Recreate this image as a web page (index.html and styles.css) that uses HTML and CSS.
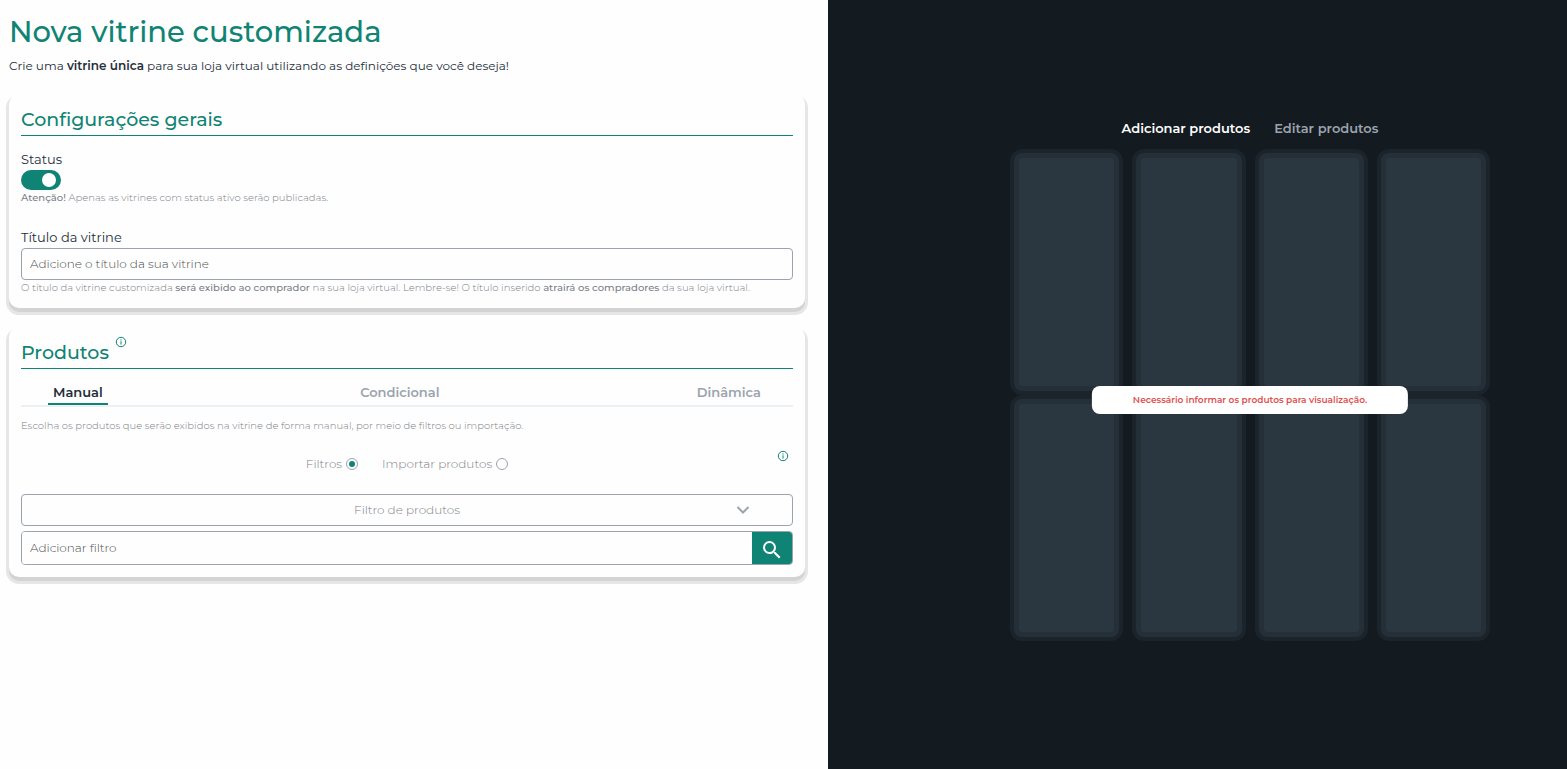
FILE: index.html
```html
<!DOCTYPE html>
<html lang="pt-BR">

<head>
    <meta charset="UTF-8">
    <title>Nova vitrine customizada</title>
    <link rel="stylesheet" href="styles.css">
</head>

<body>
    <div class="page">
        <main class="editor">
            <h1 class="title">Nova vitrine customizada</h1>
            <p class="subtitle">Crie uma <b>vitrine única</b> para sua loja virtual utilizando as definições que você deseja!</p>

            <section class="card">
                <h2 class="card-title">Configurações gerais</h2>
                <label class="label" for="status">Status</label>
                <input class="switch" type="checkbox" id="status" checked>
                <p class="hint"><b>Atenção!</b> Apenas as vitrines com status ativo serão publicadas.</p>

                <label class="label label-title" for="titulo">Título da vitrine</label>
                <input class="field" type="text" id="titulo" placeholder="Adicione o título da sua vitrine">
                <p class="hint">O título da vitrine customizada <b>será exibido ao comprador</b> na sua loja virtual. Lembre-se! O título inserido <b>atrairá os compradores</b> da sua loja virtual.</p>
            </section>

            <section class="card">
                <h2 class="card-title">Produtos
                    <svg class="info" viewBox="0 0 12 12"><circle cx="6" cy="6" r="4.700" /><path d="M6 3.300v1.200M6 5.300v3.300" /></svg>
                </h2>
                <nav class="tabs">
                    <button class="tab active" type="button">Manual</button>
                    <button class="tab" type="button">Condicional</button>
                    <button class="tab" type="button">Dinâmica</button>
                </nav>
                <p class="hint hint-tab">Escolha os produtos que serão exibidos na vitrine de forma manual, por meio de filtros ou importação.</p>

                <div class="options">
                    <label class="option">Filtros <input class="radio" type="radio" name="tipo" checked></label>
                    <label class="option">Importar produtos <input class="radio" type="radio" name="tipo"></label>
                    <svg class="info info-options" viewBox="0 0 12 12"><circle cx="6" cy="6" r="4.700" /><path d="M6 3.300v1.200M6 5.300v3.300" /></svg>
                </div>

                <div class="select-box">
                    <select class="field select" aria-label="Filtro de produtos">
                        <option>Filtro de produtos</option>
                    </select>
                    <svg class="chevron" viewBox="0 0 14 10"><path d="M1.500 2l5.500 5.500L12.500 2" /></svg>
                </div>
                <div class="search">
                    <input class="search-input" type="text" placeholder="Adicionar filtro" aria-label="Adicionar filtro">
                    <button class="search-button" type="button" aria-label="Buscar">
                        <svg class="search-icon" viewBox="0 0 24 24"><path d="M15.500 14h-.79l-.28-.27A6.470 6.470 0 0 0 16 9.500 6.500 6.500 0 1 0 9.500 16c1.610 0 3.090-.59 4.230-1.570l.27.28v.79l5 4.990L20.490 19l-4.990-5zm-6 0C7.010 14 5 11.990 5 9.500S7.010 5 9.500 5 14 7.010 14 9.500 11.990 14 9.500 14z" /></svg>
                    </button>
                </div>
            </section>
        </main>

        <aside class="preview">
            <nav class="preview-tabs">
                <button class="preview-tab active" type="button">Adicionar produtos</button>
                <button class="preview-tab" type="button">Editar produtos</button>
            </nav>
            <div class="tiles">
                <div class="tile"></div>
                <div class="tile"></div>
                <div class="tile"></div>
                <div class="tile"></div>
                <div class="tile"></div>
                <div class="tile"></div>
                <div class="tile"></div>
                <div class="tile"></div>
                <p class="message">Necessário informar os produtos para visualização.</p>
            </div>
        </aside>
    </div>
</body>

</html>
```

FILE: styles.css
```css
* {
    box-sizing: border-box;
}

body {
    margin: 0;
    font-family: Montserrat, Inter, "Open Sans", sans-serif;
    font-size: 12px;
    font-weight: 300;
    color: #242e3a;
    background-color: #fefefe;
}

h1, h2, p {
    margin: 0;
}

b {
    font-weight: 600;
}

button, input, select {
    font: inherit;
    color: inherit;
    margin: 0;
}

button {
    border: none;
    padding: 0;
    background: none;
    cursor: pointer;
}

.page {
    display: grid;
    grid-template-columns: 828fr 739fr;
    min-height: 100vh;
}

.editor {
    padding: 12px 23px 20px 9px;
}

.title {
    font-size: 29px;
    line-height: 40px;
    font-weight: 500;
    color: #108474;
}

.subtitle {
    margin-top: 4px;
    font-weight: 400;
    line-height: 20px;
}

.card {
    margin-top: 18px;
    padding: 12px;
    border-radius: 10px;
    background-color: #fefefe;
    box-shadow: 0 4px 0 #d3d3d3, 0 4px 0 3px #e6e6e6;
}

.card + .card {
    margin-top: 19px;
}

.card-title {
    display: flex;
    gap: 6px;
    font-size: 19px;
    line-height: 28px;
    padding-bottom: 1px;
    font-weight: 500;
    color: #108474;
    border-bottom: 1px solid #108474;
}

.card-title .info {
    margin-top: -3px;
}

.label {
    display: block;
    margin-top: 12px;
    font-size: 13px;
    line-height: 22px;
    font-weight: 400;
}

.label-title {
    margin-top: 20px;
}

.switch {
    display: block;
    appearance: none;
    width: 40px;
    height: 20px;
    padding: 3px 5px;
    border-radius: 10px;
    background-color: #9ca3af;
    cursor: pointer;
}

.switch::before {
    content: "";
    display: block;
    width: 14px;
    height: 14px;
    border-radius: 50%;
    background-color: #ffffff;
}

.switch:checked {
    background-color: #108474;
}

.switch:checked::before {
    margin-left: auto;
}

.hint {
    font-size: 10px;
    line-height: 16px;
    color: #7d8089;
}

.hint b {
    font-weight: 500;
}

.field {
    display: block;
    width: 100%;
    height: 32px;
    padding: 0 8px 2px;
    border: 1px solid #9ca3af;
    border-radius: 4px;
    background-color: #fefefe;
}

::placeholder {
    color: #4b4b4b;
    opacity: 1;
}

.info {
    width: 12px;
    height: 12px;
    fill: none;
    stroke: #108474;
}

.tabs {
    display: flex;
    justify-content: space-between;
    margin-top: 12px;
    padding: 0 27px;
    border-bottom: 2px solid #ebf1f5;
}

.tab {
    padding: 0 5px;
    font-size: 13px;
    line-height: 22px;
    font-weight: 600;
    color: #9ca3af;
    border-bottom: 2px solid transparent;
}

.tab.active {
    color: #242e3a;
    border-color: #108474;
}

.hint-tab {
    margin-top: 11px;
}

.options {
    display: flex;
    justify-content: center;
    align-items: center;
    gap: 24px;
    position: relative;
    margin: 20px 0;
    color: #7d8089;
}

.option {
    display: flex;
    align-items: center;
    gap: 4px;
    line-height: 20px;
}

.radio {
    appearance: none;
    width: 12px;
    height: 12px;
    padding: 2px;
    border: 1px solid #9ca3af;
    border-radius: 50%;
}

.radio:checked {
    background: #108474 content-box;
}

.info-options {
    position: absolute;
    top: -4px;
    right: 4px;
}

.select-box {
    position: relative;
}

.select {
    appearance: none;
    text-align: center;
    text-align-last: center;
    color: #7d8089;
}

.chevron {
    position: absolute;
    top: 11px;
    right: 43px;
    width: 14px;
    height: 10px;
    fill: none;
    stroke: #9ca3af;
    stroke-width: 2;
    pointer-events: none;
}

.search {
    display: flex;
    height: 34px;
    margin-top: 5px;
    border: 1px solid #9ca3af;
    border-radius: 4px;
    overflow: hidden;
}

.search-input {
    flex: 1;
    min-width: 0;
    padding: 0 8px 2px;
    border: none;
    background-color: #fefefe;
}

.search-button {
    display: flex;
    align-items: center;
    justify-content: center;
    width: 40px;
    padding-top: 4px;
    background-color: #108474;
}

.search-icon {
    width: 24px;
    height: 24px;
    fill: #ffffff;
}

.preview {
    padding: 117px 81px 20px 186px;
    background-color: #131a20;
}

.preview-tabs {
    display: flex;
    justify-content: center;
    gap: 24px;
}

.preview-tab {
    font-size: 13px;
    line-height: 22px;
    font-weight: 600;
    color: #9ca3af;
}

.preview-tab.active {
    color: #ffffff;
}

.tiles {
    display: grid;
    grid-template-columns: repeat(4, 1fr);
    gap: 8px 17px;
    position: relative;
    margin-top: 14px;
}

.tile {
    height: 238px;
    border: 5px solid #242f38;
    border-radius: 8px;
    background-color: #2a3640;
    box-shadow: 0 0 0 4px #1b232b;
}

.message {
    position: absolute;
    top: 51%;
    left: 50%;
    transform: translate(-50%, -50%);
    width: 67%;
    padding: 6px 0;
    border-radius: 8px;
    font-size: 9px;
    font-weight: 600;
    line-height: 16px;
    text-align: center;
    white-space: nowrap;
    color: #e05252;
    background-color: #ffffff;
}
```
